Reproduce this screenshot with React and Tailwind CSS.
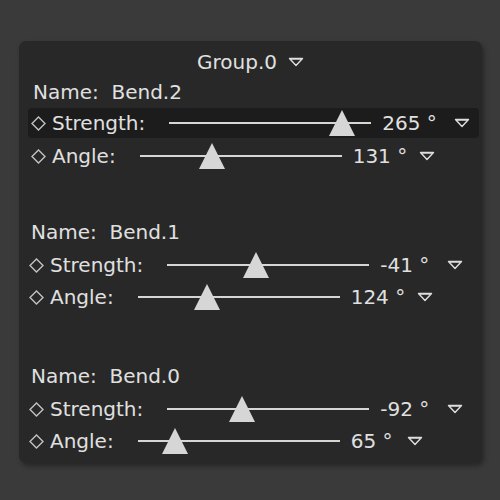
import React from "react";

const font = { fontFamily: '"DejaVu Sans", Verdana, sans-serif' };

const sections = [
  {
    name: "Bend.2",
    mt: "mt-[6px]",
    pad: "pl-[14px]",
    rows: [
      { label: "Strength:", value: "265 °", pos: 173, gap: "ml-[17px]", active: true },
      { label: "Angle:", value: "131 °", pos: 72, gap: "ml-[12px]" },
    ],
  },
  {
    name: "Bend.1",
    mt: "mt-[48px]",
    pad: "pl-[12px]",
    rows: [
      { label: "Strength:", value: "-41 °", pos: 89, gap: "ml-[18px]" },
      { label: "Angle:", value: "124 °", pos: 69, gap: "ml-[12px]" },
    ],
  },
  {
    name: "Bend.0",
    mt: "mt-[51px]",
    pad: "pl-[12px]",
    rows: [
      { label: "Strength:", value: "-92 °", pos: 75, gap: "ml-[18px]" },
      { label: "Angle:", value: "65 °", pos: 37, gap: "ml-[15px]" },
    ],
  },
];

const DropDown = () => (
  <svg width="16" height="10" viewBox="0 0 16 10" className="shrink-0">
    <polygon
      points="1.5,1.5 14.5,1.5 8,8.5"
      fill="none"
      stroke="#dedede"
      strokeWidth="1.4"
      strokeLinejoin="round"
    />
    <line x1="3" y1="2.2" x2="13" y2="2.2" stroke="#dedede" strokeWidth="1" />
  </svg>
);

const Diamond = () => (
  <svg width="15" height="15" viewBox="0 0 15 15" className="shrink-0">
    <polygon
      points="7.5,1 14,7.5 7.5,14 1,7.5"
      fill="none"
      stroke="#c2c2c2"
      strokeWidth="1.4"
    />
  </svg>
);

const Slider = ({ pos }) => (
  <div className="relative ml-[24px] h-[26px] w-[202px] shrink-0 flex items-center">
    <div className="h-[2px] w-full bg-[#d6d6d6]" />
    <svg
      width="26"
      height="26"
      viewBox="0 0 26 26"
      className="absolute top-0"
      style={{ left: pos - 13 }}
    >
      <polygon points="13,0 26,26 0,26" fill="#d6d6d6" />
    </svg>
  </div>
);

const Row = ({ row, pad, first }) => (
  <div
    className={
      row.active
        ? "ml-[9px] mr-[3px] mt-[4px] h-[30px] pl-[3px] flex items-center rounded-[4px] bg-[#1c1c1c]"
        : `${first ? "mt-[5px]" : row.label === "Angle:" && pad === "pl-[14px]" ? "mt-[2px]" : ""} h-[32px] ${pad === "pl-[14px]" ? "pl-[12px]" : "pl-[10px]"} flex items-center`
    }
  >
    <Diamond />
    <span className="ml-[6px] text-[20px] leading-none text-[#e0e0e0]">
      {row.label}
    </span>
    <Slider pos={row.pos} />
    <span className="ml-[11px] whitespace-pre text-[20px] leading-none text-[#e0e0e0]">
      {row.value}
    </span>
    <div className={row.gap}>
      <DropDown />
    </div>
  </div>
);

export default function App() {
  return (
    <div
      className="w-[500px] h-[500px] bg-[#3a3a3a] pt-[41px] pl-[19px]"
      style={font}
    >
      <div className="w-[463px] h-[422px] rounded-[7px] bg-[#282828] shadow-[2px_3px_5px_rgba(0,0,0,0.35)] flex flex-col">
        <div className="pt-[9px] h-[33px] flex items-center justify-center gap-[11px]">
          <span className="text-[20px] leading-[24px] text-[#e0e0e0]">
            Group.0
          </span>
          <DropDown />
        </div>
        {sections.map((s) => (
          <div key={s.name} className="flex flex-col">
            <div
              className={`${s.mt} ${s.pad} h-[24px] flex items-center whitespace-pre text-[20px] leading-none text-[#e0e0e0]`}
            >
              Name:  {s.name}
            </div>
            {s.rows.map((r, i) => (
              <Row key={r.label} row={r} pad={s.pad} first={i === 0} />
            ))}
          </div>
        ))}
      </div>
    </div>
  );
}
